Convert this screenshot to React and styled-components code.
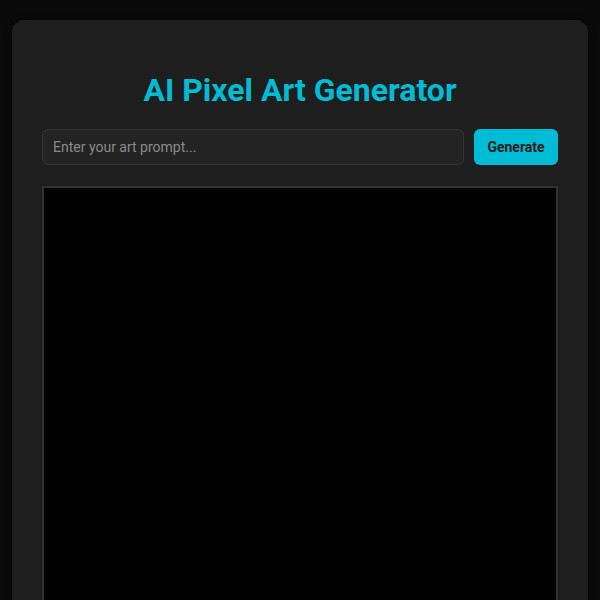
import React from "react";
import styled, { createGlobalStyle } from "styled-components";

const Global = createGlobalStyle`
  html, body { margin: 0; padding: 0; background: #0b0b0b; }
  body { font-family: Roboto, "Liberation Sans", sans-serif; color: #e0e0e0; }
  * { box-sizing: border-box; }
`;

const Page = styled.div`
  display: flex;
  justify-content: center;
  padding: 20px 12px;
`;

const Card = styled.div`
  width: 576px;
  background: #1e1e1e;
  border-radius: 12px;
  padding: 30px;
  box-shadow: 0 0 20px rgba(0, 0, 0, 0.6);
  display: flex;
  flex-direction: column;
`;

const Title = styled.h1`
  margin: 22px 0 20px;
  text-align: center;
  font-size: 32px;
  font-weight: 700;
  color: #00bcd4;
  line-height: 37px;
`;

const Row = styled.div`
  display: flex;
  gap: 10px;
  margin-bottom: 21px;
`;

const Input = styled.input`
  flex: 1;
  height: 36px;
  background: #232323;
  border: 1px solid #333;
  border-radius: 6px;
  padding: 0 10px;
  color: #e0e0e0;
  font-family: Roboto, "Liberation Sans", sans-serif;
  font-size: 14px;
  outline: none;
  &::placeholder { color: #8a8a8a; }
`;

const Button = styled.button`
  height: 36px;
  width: 84px;
  padding: 0;
  background: #00bcd4;
  color: #1a1a1a;
  border: none;
  border-radius: 6px;
  font-family: Roboto, "Liberation Sans", sans-serif;
  font-size: 14px;
  font-weight: 700;
  cursor: pointer;
`;

const Canvas = styled.div`
  width: 516px;
  height: 516px;
  background: #000;
  border: 2px solid #333;
`;

export default function App() {
  return (
    <>
      <Global />
      <Page>
        <Card>
          <Title>AI Pixel Art Generator</Title>
          <Row>
            <Input placeholder="Enter your art prompt..." />
            <Button>Generate</Button>
          </Row>
          <Canvas />
        </Card>
      </Page>
    </>
  );
}
